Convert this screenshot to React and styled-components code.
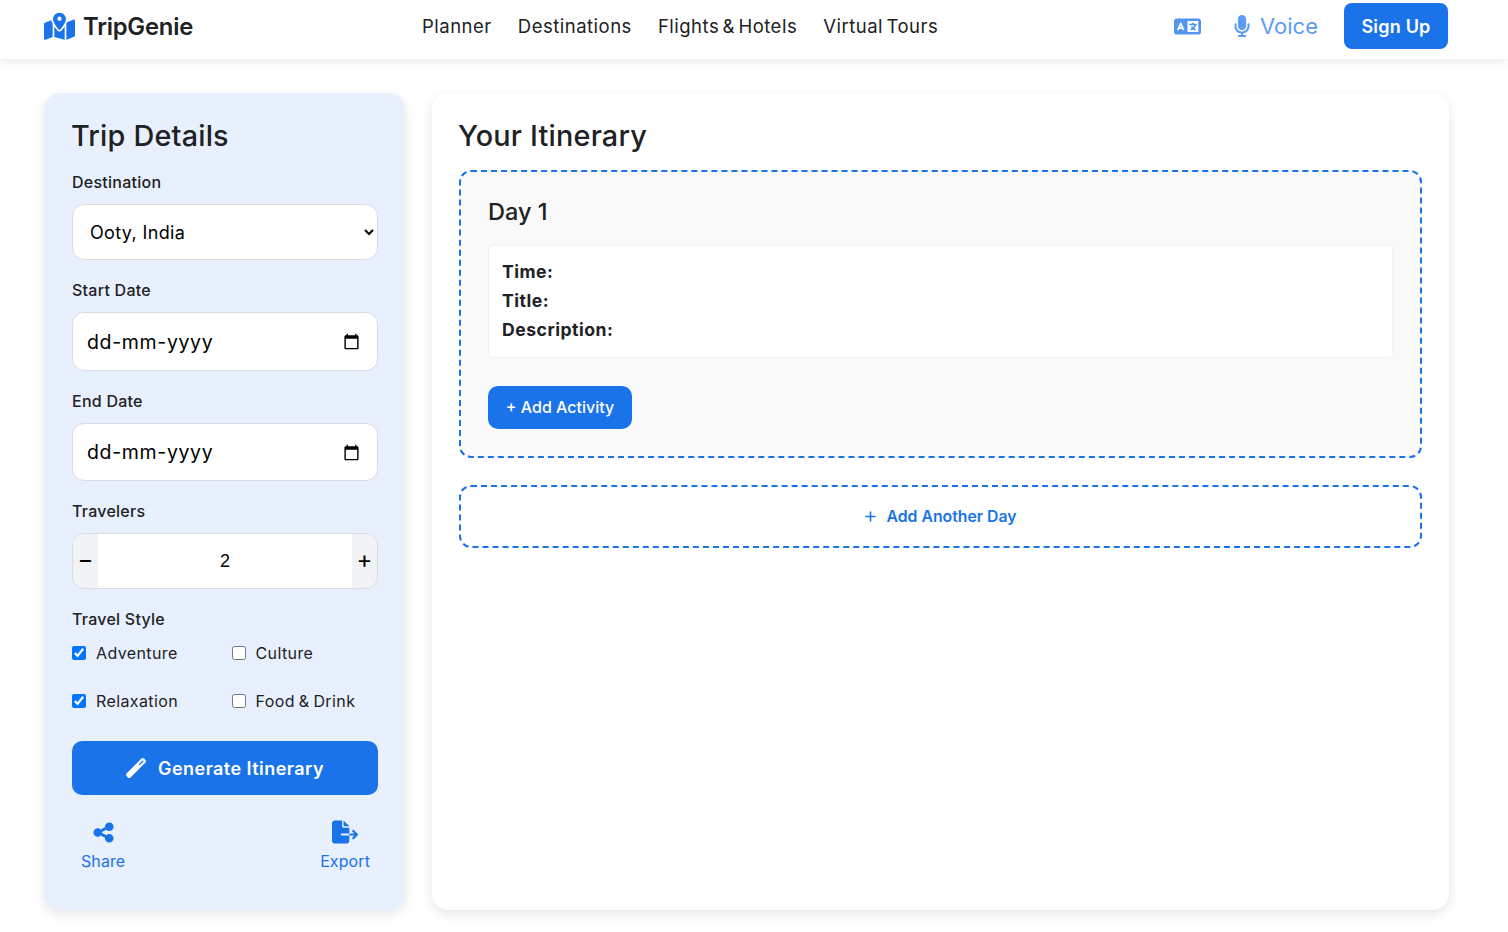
import React from "react";
import styled, {createGlobalStyle} from "styled-components";
import {
   FaMapLocationDot,
   FaLanguage,
   FaMicrophone,
   FaWandMagic,
   FaShareNodes,
   FaFileExport,
   FaPlus,
} from "react-icons/fa6";

const blue = "#1a73e8";
const ink = "#202124";

const Global = createGlobalStyle`
   * { box-sizing: border-box; }
   html, body { margin: 0; background: #fff; }
   body {
      font-family: "Inter", "Noto Sans", sans-serif;
      color: ${ink};
   }
`;
const Header = styled.header`
   height: 59px;
   padding: 3px 60px 10px 44px;
   display: flex;
   align-items: center;
   background: #fff;
   box-shadow: 0 2px 10px rgba(0, 0, 0, 0.1);
`;
const Logo = styled.div`
   display: flex;
   align-items: center;
   gap: 8px;
   width: 378px;
   font-size: 23.8px;
   font-weight: 600;
   letter-spacing: -0.2px;
   svg { color: ${blue}; font-size: 31px; }
`;
const NavLinks = styled.nav`
   display: flex;
   gap: 26px;
   font-size: 18.5px;
   letter-spacing: 0.5px;
   word-spacing: -2.3px;
`;
const HeaderRight = styled.div`
   margin-left: auto;
   display: flex;
   align-items: center;
`;
const LangBtn = styled.span`
   display: flex;
   color: ${blue};
   opacity: 0.75;
   font-size: 27px;
   margin-right: 30px;
`;
const VoiceBtn = styled.span`
   display: flex;
   align-items: center;
   gap: 7px;
   color: ${blue};
   opacity: 0.7;
   font-size: 22px;
   margin-right: 26px;
`;
const SignUp = styled.button`
   height: 46px;
   width: 104px;
   border: none;
   border-radius: 8px;
   background: ${blue};
   color: #fff;
   font: 600 18px "Inter", sans-serif;
   letter-spacing: 0.2px;
`;
const Main = styled.main`
   padding: 34px 59px 22px 44px;
   display: grid;
   grid-template-columns: 361px 1fr;
   gap: 27px;
`;
const Side = styled.aside`
   height: 817px;
   padding: 27px 27px 27px 28px;
   background: #e8f0fe;
   border-radius: 16px;
   box-shadow: 0 4px 12px rgba(0, 0, 0, 0.1);
`;
const Panel = styled.section`
   height: 817px;
   padding: 27px;
   background: #fff;
   border-radius: 16px;
   box-shadow: 0 4px 12px rgba(0, 0, 0, 0.1);
`;
const Title = styled.h2`
   margin: 0 0 20px -1px;
   height: 30px;
   line-height: 31px;
   font-size: 28.8px;
   font-weight: 500;
   letter-spacing: 0.2px;
`;
const Label = styled.div`
   height: 24px;
   line-height: 24px;
   font-size: 16px;
   font-weight: 500;
   letter-spacing: 0.25px;
   margin-top: ${(p) => p.$top || 0}px;
   margin-bottom: 10px;
`;
const Select = styled.select`
   display: block;
   width: 100%;
   height: 56px;
   padding: 0 12px 0 13px;
   background: #fff;
   border: 1px solid #dadce0;
   border-radius: 12px;
   font: 18px "Inter", sans-serif;
   letter-spacing: 0.35px;
   color: #000;
   outline: none;
`;
const DateBox = styled.div`
   height: ${(p) => p.$h}px;
   display: flex;
   align-items: center;
   justify-content: space-between;
   padding: 0 17px 0 14px;
   background: #fff;
   border: 1px solid #dadce0;
   border-radius: 12px;
   font-size: 19.5px;
   letter-spacing: 0.65px;
   color: #000;
`;
const Stepper = styled.div`
   height: 56px;
   display: grid;
   grid-template-columns: 25px 1fr 25px;
   border: 1px solid #dadce0;
   border-radius: 12px;
   overflow: hidden;
`;
const StepBtn = styled.button`
   border: none;
   padding: 0 0 4px;
   background: #f1f3f4;
   color: #000;
   font: 400 24px "Inter", sans-serif;
`;
const Count = styled.input`
   min-width: 0;
   border: none;
   padding: 0;
   text-align: center;
   background: #fff;
   color: #000;
   font: 18px "Liberation Sans", Arial, sans-serif;
   outline: none;
`;
const Checks = styled.div`
   display: grid;
   grid-template-columns: 159.5px 1fr;
   grid-auto-rows: 48px;
`;
const Check = styled.label`
   display: flex;
   align-items: center;
   gap: 10px;
   height: 24px;
   font-size: 16px;
   letter-spacing: 0.4px;
   word-spacing: -1px;
   input { margin: 0; width: 14px; height: 14px; accent-color: #0075ff; }
`;
const Generate = styled.button`
   width: 100%;
   height: 54px;
   margin-top: 4px;
   display: flex;
   align-items: center;
   justify-content: center;
   gap: 12px;
   border: none;
   border-radius: 10px;
   background: ${blue};
   color: #fff;
   font: 600 18px "Inter", sans-serif;
   letter-spacing: 0.45px;
   svg { font-size: 20px; }
`;
const Actions = styled.div`
   display: flex;
   justify-content: space-between;
   margin-top: 24px;
   padding: 0 8px 0 9px;
`;
const Action = styled.div`
   display: flex;
   flex-direction: column;
   align-items: center;
   gap: 6px;
   color: ${blue};
   font-size: 16px;
   letter-spacing: 0.1px;
`;
const ActionIcon = styled.span`
   height: 26px;
   display: flex;
   align-items: center;
   font-size: ${(p) => p.$size}px;
`;
const Day = styled.div`
   height: 288px;
   padding: 27px;
   background: #f9f9f9;
   border: 2px dashed ${blue};
   border-radius: 12px;
`;
const DayTitle = styled.h3`
   margin: 0 0 18px;
   height: 28px;
   line-height: 26px;
   font-size: 23.5px;
   font-weight: 500;
`;
const Activity = styled.div`
   height: 113px;
   padding: 11px 13px;
   background: #fff;
   border: 1px solid #f1f3f4;
   border-radius: 4px;
   margin-bottom: 28px;
`;
const Line = styled.div`
   height: 29px;
   line-height: 29px;
   font-size: 17.6px;
   font-weight: 700;
   letter-spacing: 0.5px;
`;
const AddActivity = styled.button`
   width: 144px;
   height: 43px;
   padding: 0 0 2px;
   border: none;
   border-radius: 10px;
   background: ${blue};
   color: #fff;
   font: 500 16px "Inter", sans-serif;
`;
const AddDay = styled.div`
   height: 63px;
   margin-top: 27px;
   padding-bottom: 1px;
   display: flex;
   align-items: center;
   justify-content: center;
   gap: 9px;
   border: 2px dashed ${blue};
   border-radius: 12px;
   color: ${blue};
   font-size: 15.8px;
   font-weight: 600;
   svg { font-size: 13px; }
`;

const Calendar = () => (
   <svg width="17" height="17" viewBox="0 0 24 24" fill="#000">
      <path d="M20 3h-1V1h-2v2H7V1H5v2H4c-1.1 0-2 .9-2 2v16c0 1.1.9 2 2 2h16c1.1 0 2-.9 2-2V5c0-1.1-.9-2-2-2zm0 18H4V8h16v13z" />
   </svg>
);

const styles = [
   ["Adventure", true],
   ["Culture", false],
   ["Relaxation", true],
   ["Food & Drink", false],
];

const App = () => {
   const checkArr = styles.map(([name, on]) => {
      return (
         <Check key={name}>
            <input type="checkbox" defaultChecked={on} />
            {name}
         </Check>
      );
   });
   return (
      <>
         <Global />
         <Header>
            <Logo>
               <FaMapLocationDot />
               TripGenie
            </Logo>
            <NavLinks>
               <span>Planner</span>
               <span>Destinations</span>
               <span>Flights &amp; Hotels</span>
               <span>Virtual Tours</span>
            </NavLinks>
            <HeaderRight>
               <LangBtn>
                  <FaLanguage />
               </LangBtn>
               <VoiceBtn>
                  <FaMicrophone />
                  Voice
               </VoiceBtn>
               <SignUp>Sign Up</SignUp>
            </HeaderRight>
         </Header>
         <Main>
            <Side>
               <Title>Trip Details</Title>
               <Label>Destination</Label>
               <Select defaultValue="Ooty, India">
                  <option>Ooty, India</option>
               </Select>
               <Label $top={18}>Start Date</Label>
               <DateBox $h={59}>
                  dd-mm-yyyy
                  <Calendar />
               </DateBox>
               <Label $top={18}>End Date</Label>
               <DateBox $h={58}>
                  dd-mm-yyyy
                  <Calendar />
               </DateBox>
               <Label $top={18}>Travelers</Label>
               <Stepper>
                  <StepBtn>−</StepBtn>
                  <Count defaultValue="2" />
                  <StepBtn>+</StepBtn>
               </Stepper>
               <Label $top={18}>Travel Style</Label>
               <Checks>{checkArr}</Checks>
               <Generate>
                  <FaWandMagic />
                  Generate Itinerary
               </Generate>
               <Actions>
                  <Action>
                     <ActionIcon $size={23}>
                        <FaShareNodes />
                     </ActionIcon>
                     Share
                  </Action>
                  <Action>
                     <ActionIcon $size={26}>
                        <FaFileExport />
                     </ActionIcon>
                     Export
                  </Action>
               </Actions>
            </Side>
            <Panel>
               <Title>Your Itinerary</Title>
               <Day>
                  <DayTitle>Day 1</DayTitle>
                  <Activity>
                     <Line>Time:</Line>
                     <Line>Title:</Line>
                     <Line>Description:</Line>
                  </Activity>
                  <AddActivity>+ Add Activity</AddActivity>
               </Day>
               <AddDay>
                  <FaPlus />
                  Add Another Day
               </AddDay>
            </Panel>
         </Main>
      </>
   );
};

export default App;
